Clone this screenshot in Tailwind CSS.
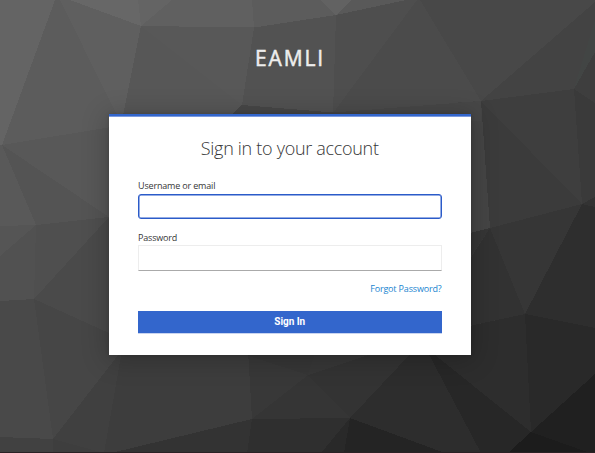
<!DOCTYPE html>
<html lang="en">
<head>
<meta charset="utf-8">
<title>Sign in to EAMLI</title>
<script src="https://cdn.jsdelivr.net/npm/@tailwindcss/browser@4"></script>
</head>
<body class="relative h-[453px] w-[595px] overflow-hidden bg-[#404040] font-['Open_Sans','Noto_Sans',sans-serif] text-[#363636]">
<svg class="absolute inset-0 -z-10" width="595" height="453" viewBox="0 0 595 453" aria-hidden="true">
<rect width="595" height="453" fill="#383838"/>
<g shape-rendering="crispEdges">
<path fill="#646464" d="M0 0H55L2 145H0z"/>
<path fill="#5c5c5c" d="M55 0h5l48 97 15 29L2 145z"/>
<path fill="#5f5f5f" d="M60 0h10l71 26-18 100-15-29z"/>
<path fill="#676767" d="M70 0h68l3 26z"/>
<path fill="#646464" d="M138 0h34l-31 26z"/>
<path fill="#606060" d="M172 0h80l2 27.500-113-1.500z"/>
<path fill="#5c5c5c" d="M252 0h68l16 15-82 12.500z"/>
<path fill="#626262" d="M320 0h31l-15 15z"/>
<path fill="#595959" d="M351 0h55l-70 15z"/>
<path fill="#525252" d="M254 27.500L336 15l-3 98-91-8z"/>
<path fill="#585858" d="M141 26l113 1.500L242 105z"/>
<path fill="#575757" d="M141 26l101 79-20 21H121z"/>
<path fill="#4e4e4e" d="M336 15L406 0h11l-84 113z"/>
<path fill="#4b4b4b" d="M417 0h3l61 101-148 12z"/>
<path fill="#484848" d="M420 0h175v2L481 101z"/>
<path fill="#434343" d="M595 2v19l-21 68-93 12z"/>
<path fill="#424544" d="M595 20v32l-21 37z"/>
<path fill="#3e3e3e" d="M595 52v51l-21-14z"/>
<path fill="#3a3a3a" d="M574 89l21 14v94l-13 7z"/>
<path fill="#3e3e3e" d="M481 101l93-12 8 115z"/>
<path fill="#3b3b3b" d="M481 101l101 103-92 24z"/>
<path fill="#454545" d="M481 101l9 127-40 10V103z"/>
<path fill="#363636" d="M490 228l92-24-57 110z"/>
<path fill="#323232" d="M490 228l35 86-75 16v-40z"/>
<path fill="#363636" d="M490 228l-40 10v47l21-29z"/>
<path fill="#2e2e2e" d="M582 204l13 3v121l-70-14z"/>
<path fill="#333" d="M582 204l13-7v10z"/>
<path fill="#292929" d="M525 314l70 14v46l-64 58z"/>
<path fill="#2d2d2d" d="M525 314l6 118-101-81 30-23z"/>
<path fill="#202020" d="M531 432l64-58v79h-5z"/>
<path fill="#1c1c1c" d="M531 432l-23 21h82z"/>
<path fill="#272727" d="M425 347l106 85-23 21h-27z"/>
<path fill="#2d2d2d" d="M410 347h15l56 106h-36l-95-35z"/>
<path fill="#242424" d="M350 418l95 35H344z"/>
<path fill="#292929" d="M350 418l-6 35h-23z"/>
<path fill="#333" d="M308 375l75-25h31l-64 68z"/>
<path fill="#2f2f2f" d="M252 419l98-1-29 35h-74z"/>
<path fill="#353535" d="M308 375l42 43-98 1z"/>
<path fill="#383838" d="M248 350v7l60 18-56 44z"/>
<path fill="#363636" d="M230 350h86l-8 25z"/>
<path fill="#373737" d="M316 350h67l-75 25z"/>
<path fill="#3d3d3d" d="M122 350h126l4 69-141 34h-7z"/>
<path fill="#333" d="M252 419l-5 34H111z"/>
<path fill="#585858" d="M2 145l121-20v94l-14-2z"/>
<path fill="#545454" d="M2 145l107 72-73 8z"/>
<path fill="#595959" d="M0 145h2l34 80-36 1z"/>
<path fill="#555" d="M0 226l36-1-36 31z"/>
<path fill="#515151" d="M0 256l36-31-2 74-34 2z"/>
<path fill="#4f4f4f" d="M36 225l73-8-75 82z"/>
<path fill="#4a4a4a" d="M34 299l75-82 10 0v120l-10-4z"/>
<path fill="#464646" d="M34 299l75 34 13 17-69 89z"/>
<path fill="#494949" d="M0 301l34-2 19 140-53-2z"/>
<path fill="#404040" d="M53 439l69-89-18 103z"/>
<path fill="#414141" d="M0 437l53 2v14H0z"/>
<path fill="#3e3e3e" d="M53 439l51 14H53z"/>
<path fill="#474747" d="M230 116l12-11 91 7.500 148-11.500v20H230z"/>
</g>
<rect y="452" width="595" height="1" fill="#2b2225"/>
</svg>
<header class="flex h-[114px] w-[580px] items-start justify-center pt-[43px]">
<h1 class="text-[21px] leading-[30px] font-medium tracking-[1.900px] text-[#ededed] [-webkit-text-stroke:0.500px_#ededed]">EAMLI</h1>
</header>
<main class="ml-[108.500px] h-[241px] w-[362.500px] border-t-2 border-[#3366cc] bg-white px-[29.500px] shadow-[0_3px_24px_3px_rgba(0,0,0,0.2),0_0_4px_rgba(0,0,0,0.15)]">
<div class="-mx-[29.500px] h-px bg-[#7c9ade]"></div>
<h2 class="pt-[19px] text-center text-[18px] leading-[24px] font-light tracking-[-0.300px] whitespace-nowrap">Sign in to your account</h2>
<form class="flex flex-col">
<label for="user" class="mt-[19px] h-[14px] text-[9px] leading-[14px] tracking-[-0.170px]">Username or email</label>
<input id="user" class="mt-px h-[25px] w-full rounded-[3px] border border-[#2b5bc9] bg-white shadow-[inset_0_0_0_0.500px_#2b5bc9] outline-none">
<label for="pass" class="mt-[12px] h-[14px] text-[9px] leading-[14px] tracking-[-0.170px]">Password</label>
<input id="pass" type="password" class="h-[26px] w-full border border-[#ededed] border-b-[#aaa] bg-white outline-none">
<a href="#" class="mt-[11px] self-end text-[9px] leading-[14px] font-medium tracking-[-0.170px] text-[#2185d0]">Forgot Password?</a>
<button type="button" class="mt-[15px] h-[22px] w-full bg-[#3366cc] font-['Roboto','Open_Sans',sans-serif] text-[10px] leading-[22px] font-bold tracking-[-0.050px] text-white shadow-[0_1px_0_#c8d4f0]">Sign In</button>
</form>
</main>
</body>
</html>
